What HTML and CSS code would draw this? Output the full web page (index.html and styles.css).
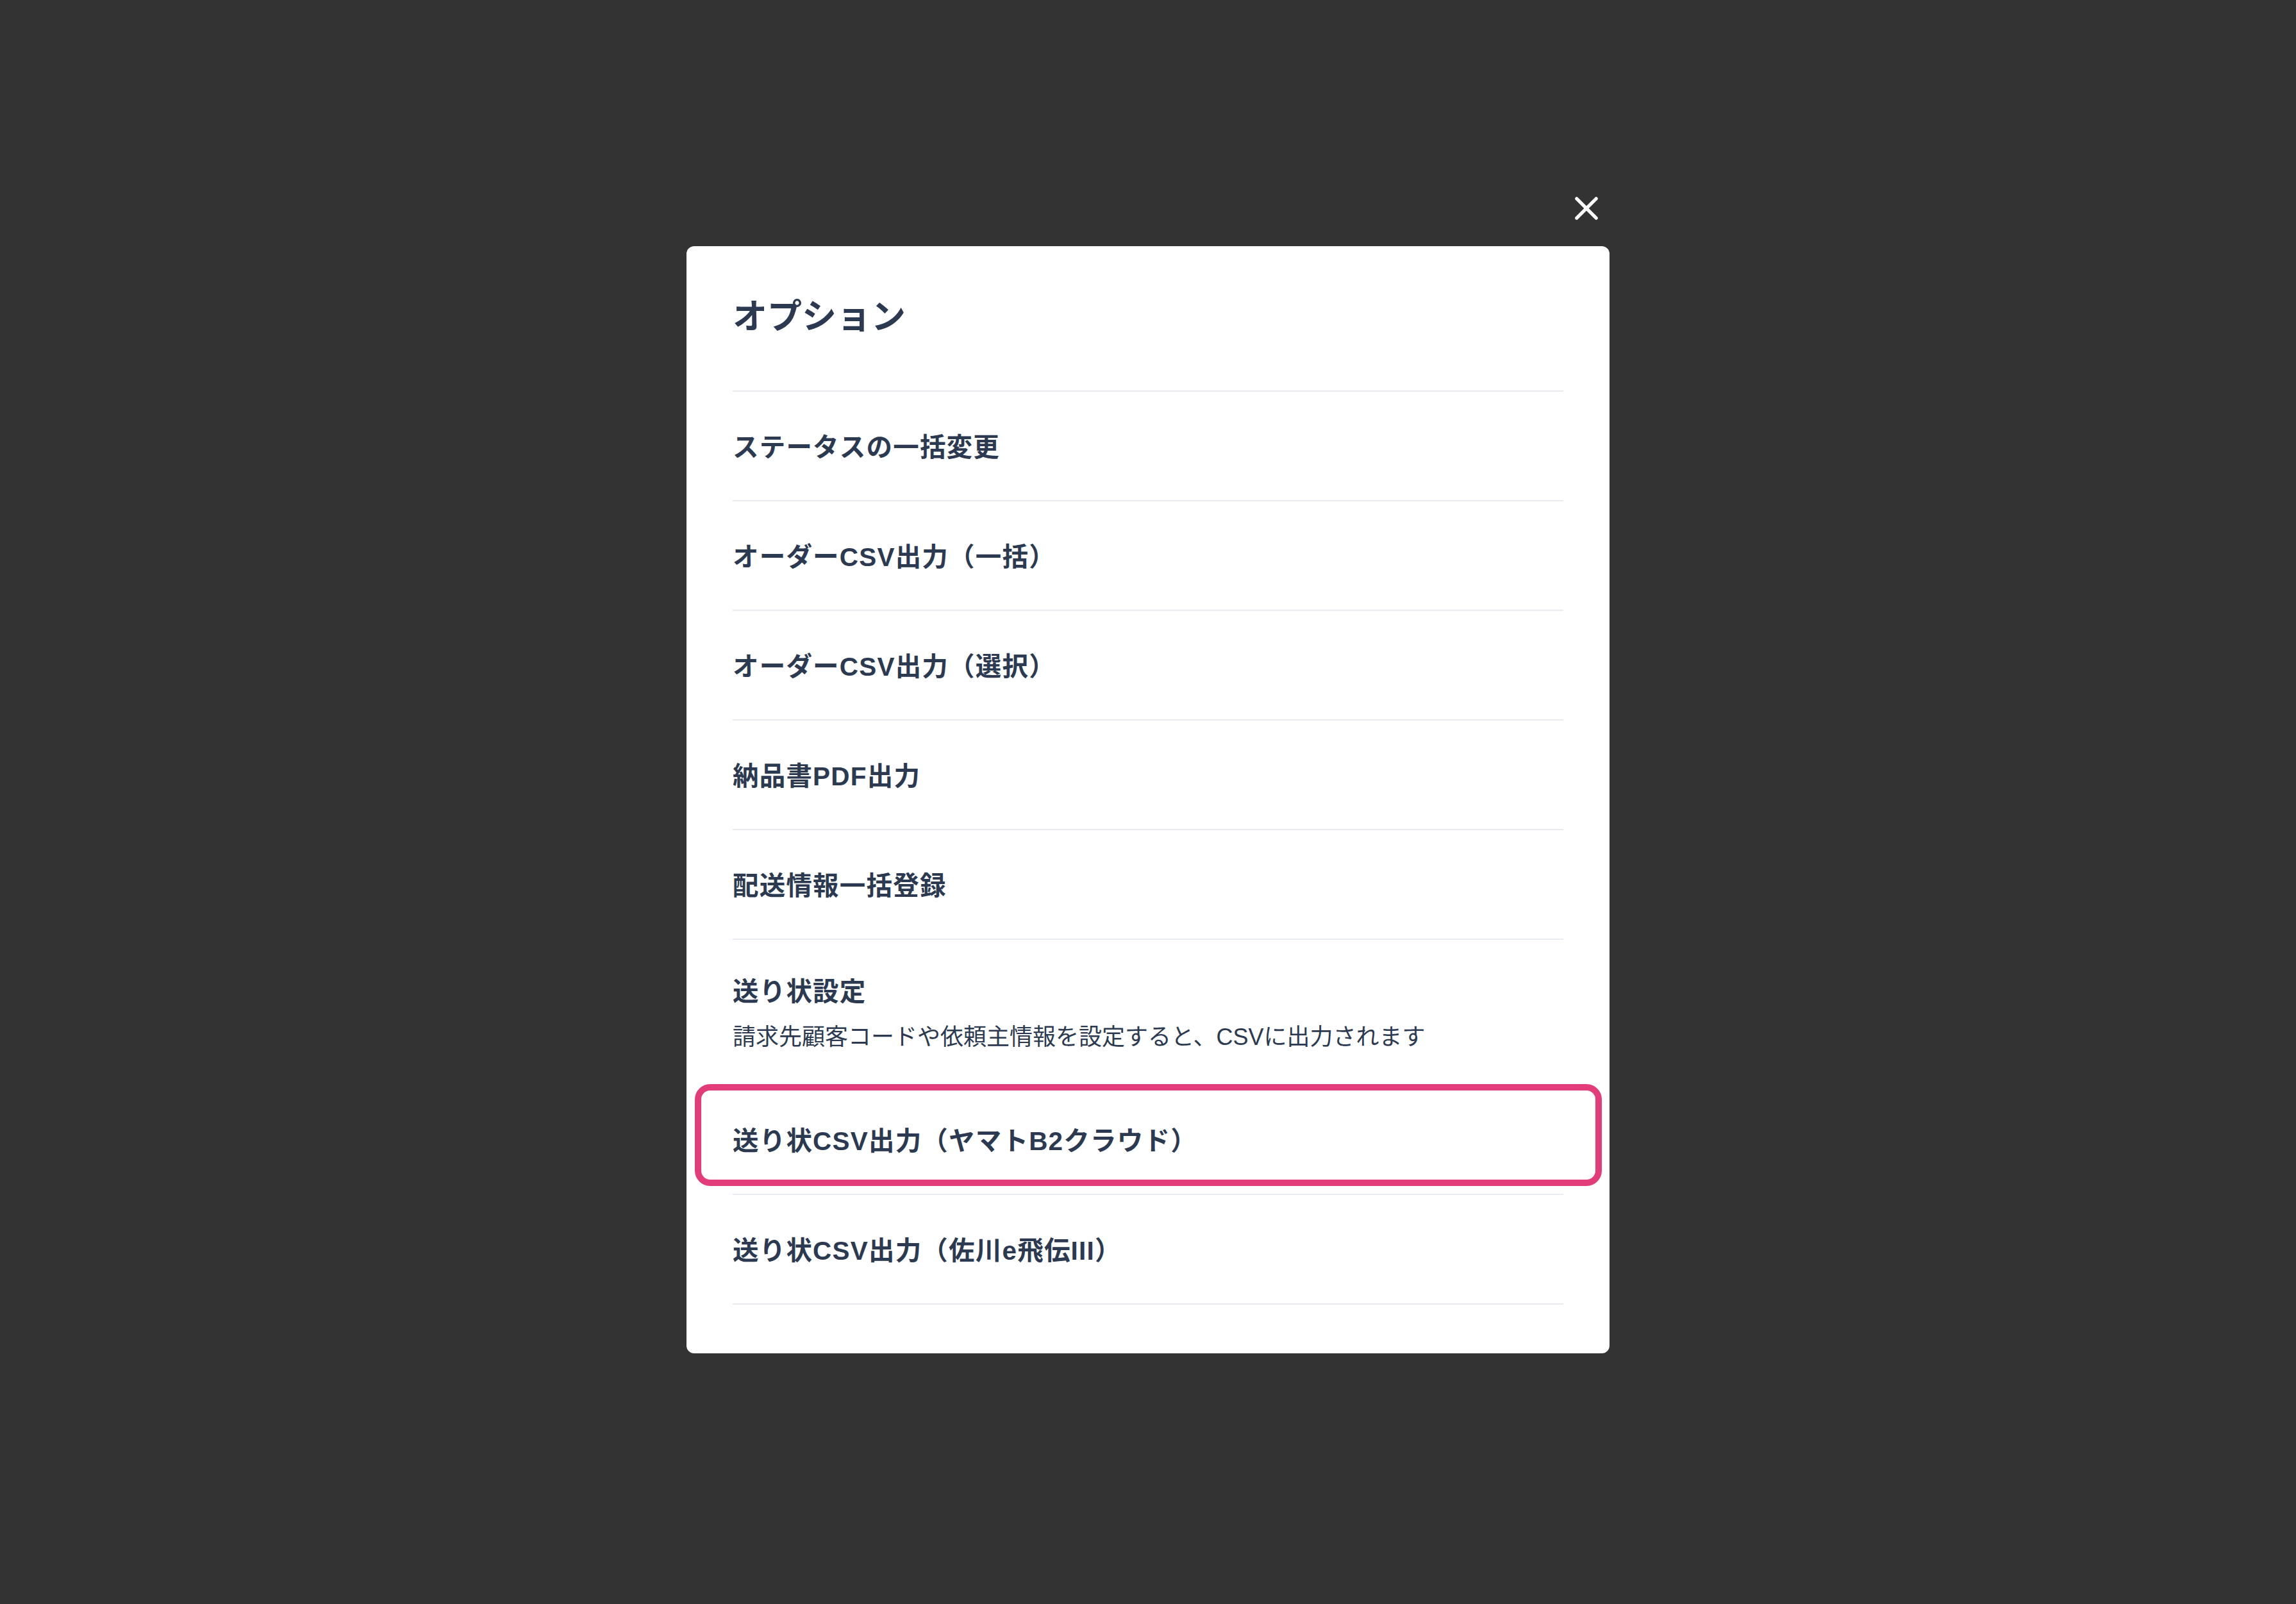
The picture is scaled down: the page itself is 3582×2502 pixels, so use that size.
FILE: index.html
```html
<!DOCTYPE html>
<html lang="ja">
<head>
<meta charset="utf-8">
<title>オプション</title>
<link rel="stylesheet" href="styles.css">
</head>
<body>
<div class="overlay">
  <div class="modal">
    <button class="close" aria-label="閉じる">
      <svg viewBox="0 0 36 36" width="36" height="36"><path d="M2.8 2.8L33.2 33.2M33.2 2.8L2.8 33.2" stroke="#ffffff" stroke-width="5.2" stroke-linecap="round" fill="none"/></svg>
    </button>
    <h2 class="modal-title">オプション</h2>
    <ul class="options">
      <li class="option">ステータスの一括変更</li>
      <li class="option">オーダーCSV出力（一括）</li>
      <li class="option">オーダーCSV出力（選択）</li>
      <li class="option">納品書PDF出力</li>
      <li class="option">配送情報一括登録</li>
      <li class="option option-desc">
        <div class="option-name">送り状設定</div>
        <div class="option-note">請求先顧客コードや依頼主情報を設定すると、CSVに出力されます</div>
      </li>
      <li class="option option-marked">送り状CSV出力（ヤマトB2クラウド）<span class="mark"></span></li>
      <li class="option">送り状CSV出力（佐川e飛伝III）</li>
    </ul>
  </div>
</div>
</body>
</html>
```
FILE: styles.css
```css
html, body {
  margin: 0;
  padding: 0;
}
body {
  background: #333333;
  font-family: "Liberation Sans", "Noto Sans CJK JP", sans-serif;
  color: #2c3a51;
}
.overlay {
  min-height: 100vh;
  display: flex;
  align-items: center;
  justify-content: center;
  padding-bottom: 8px;
  box-sizing: border-box;
}
.modal {
  position: relative;
  width: 1440px;
  box-sizing: border-box;
  background: #ffffff;
  border-radius: 12px;
  padding: 72px 72px 76px;
}
.close {
  position: absolute;
  top: -77px;
  right: 18px;
  width: 36px;
  height: 36px;
  padding: 0;
  border: 0;
  background: transparent;
  display: block;
  cursor: pointer;
}
.close svg {
  display: block;
}
.modal-title {
  margin: -2px 0 0;
  font-size: 54px;
  line-height: 81px;
  font-weight: 700;
  padding-bottom: 74px;
  border-bottom: 2px solid #e8ebf1;
}
.options {
  list-style: none;
  margin: 0;
  padding: 0;
}
.option {
  position: relative;
  padding: 57px 0 51px;
  font-size: 40.5px;
  line-height: 61px;
  font-weight: 700;
  letter-spacing: 1.2px;
  border-bottom: 2px solid #e8ebf1;
}
.option-desc {
  padding: 56px 0 53px;
}
.option-name {
  line-height: 50px;
}
.option-note {
  margin-top: 26px;
  font-size: 36px;
  line-height: 40px;
  font-weight: 400;
  letter-spacing: 0;
}
.mark {
  position: absolute;
  left: -59px;
  right: -60px;
  top: -2px;
  bottom: 12px;
  border: 10px solid #e33c7b;
  border-radius: 24px;
  pointer-events: none;
}
```
